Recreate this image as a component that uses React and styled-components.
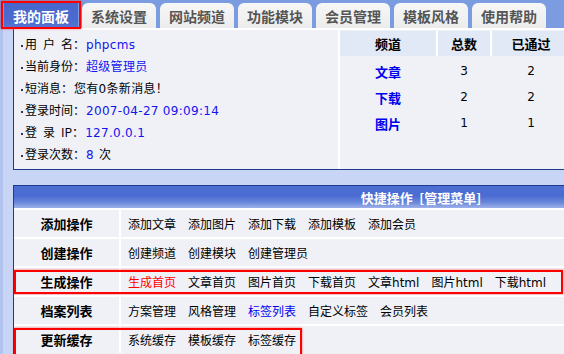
import React from 'react'
import styled, { createGlobalStyle } from 'styled-components'

const tabs = ['我的面板', '系统设置', '网站频道', '功能模块', '会员管理', '模板风格', '使用帮助']

const infoLines = [
  { label: '用\u2002户\u2002名：', parts: [{ text: 'phpcms', blue: true }] },
  { label: '当前身份：', parts: [{ text: '超级管理员', blue: true }] },
  { label: '短消息：', parts: [{ text: '您有0条新消息！' }] },
  { label: '登录时间：', parts: [{ text: '2007-04-27 09:09:14', blue: true }] },
  { label: '登\u2002录\u2002IP：', parts: [{ text: '127.0.0.1', blue: true }] },
  { label: '登录次数：', parts: [{ text: '8', blue: true }, { text: ' 次' }] },
]

const stats = [
  { name: '文章', total: 3, passed: 2 },
  { name: '下载', total: 2, passed: 2 },
  { name: '图片', total: 1, passed: 1 },
]

const quickRows = [
  { title: '添加操作', items: [{ text: '添加文章' }, { text: '添加图片' }, { text: '添加下载' }, { text: '添加模板' }, { text: '添加会员' }] },
  { title: '创建操作', items: [{ text: '创建频道' }, { text: '创建模块' }, { text: '创建管理员' }] },
  {
    title: '生成操作',
    mark: 549,
    items: [
      { text: '生成首页', tone: 'red' }, { text: '文章首页' }, { text: '图片首页' }, { text: '下载首页' },
      { text: '文章html' }, { text: '图片html' }, { text: '下载html' },
    ],
  },
  { title: '档案列表', items: [{ text: '方案管理' }, { text: '风格管理' }, { text: '标签列表', tone: 'blue' }, { text: '自定义标签' }, { text: '会员列表' }] },
  { title: '更新缓存', mark: 288, tall: true, items: [{ text: '系统缓存' }, { text: '模板缓存' }, { text: '标签缓存' }] },
]

const App = () => (
  <Root>
    <GlobalStyle />
    <TabBar>
      {tabs.map((t, i) => (
        <Tab key={t} $active={i === 0}>{t}</Tab>
      ))}
    </TabBar>
    <Body>
      <InfoPanel>
        <InfoList>
          {infoLines.map(({ label, parts }) => (
            <InfoLine key={label}>
              {label}
              {parts.map((p, i) => (
                <Value key={i} $blue={p.blue}>{p.text}</Value>
              ))}
            </InfoLine>
          ))}
        </InfoList>
        <StatBox>
          <StatHead>频道</StatHead>
          <StatHead $split>总数</StatHead>
          <StatHead $split>已通过</StatHead>
          {stats.map(({ name, total, passed }) => (
            <React.Fragment key={name}>
              <StatCell><StatLink>{name}</StatLink></StatCell>
              <StatCell $split>{total}</StatCell>
              <StatCell $split>{passed}</StatCell>
            </React.Fragment>
          ))}
        </StatBox>
      </InfoPanel>

      <QuickPanel>
        <QuickHeader>快捷操作{'\u2002'}[管理菜单]</QuickHeader>
        {quickRows.map(({ title, items, mark, tall }) => (
          <QuickRow key={title}>
            <RowTitle>{title}</RowTitle>
            <RowItems>
              {items.map(({ text, tone }) => (
                <Item key={text} $tone={tone}>{text}</Item>
              ))}
            </RowItems>
            {mark && <Mark $width={mark} $tall={tall} />}
          </QuickRow>
        ))}
      </QuickPanel>
    </Body>
  </Root>
)

export default App

/* STYLES */

const GlobalStyle = createGlobalStyle`
  body {
    margin: 0;
    background: #c9d5f5;
    font-family: "DejaVu Sans", "Noto Sans CJK SC", sans-serif;
    font-size: 12px;
    color: #000;
  }
`

const Root = styled.div`
  position: relative;
  width: 564px;
  height: 354px;
  overflow: hidden;
  background: #c9d5f5;
`

const TabBar = styled.div`
  display: flex;
  gap: 4px;
  height: 28px;
  padding: 3px 0 0 4px;
  box-sizing: border-box;
  background: #7c9ce2;
`

const Tab = styled.div`
  position: relative;
  flex: 0 0 74px;
  display: flex;
  align-items: center;
  justify-content: center;
  border-radius: ${p => (p.$active ? '0' : '6px 6px 0 0')};
  background: ${p => (p.$active ? 'linear-gradient(#4767cc, #4b6bd0 70%, #5575d6)' : 'linear-gradient(#f7f7f7, #ececec)')};
  color: ${p => (p.$active ? '#fff' : '#555')};
  font-family: "Noto Sans CJK SC", sans-serif;
  font-size: 14px;
  font-weight: bold;

  ${p => p.$active && `
    &::after {
      content: '';
      position: absolute;
      left: -3px;
      top: -2px;
      width: 80px;
      height: 28px;
      box-sizing: border-box;
      border: 2px solid #f00;
      box-shadow: 0 0 2px rgba(255, 0, 0, 0.6);
    }
  `}
`

const Body = styled.div`
  border-left: 3px solid #b2c3ef;
  padding-left: 10px;
`

const InfoPanel = styled.div`
  display: flex;
  width: 560px;
  height: 139px;
  background: #eff1f7;
  border-top: 2px solid #fff;
  border-left: 1px solid #1f3b8f;
  border-bottom: 1px solid #1f3b8f;
`

const InfoList = styled.div`
  width: 324px;
  padding: 3px 0 0 7px;
  box-sizing: border-box;
`

const InfoLine = styled.div`
  height: 22px;
  line-height: 22px;
  white-space: nowrap;
  font-family: "Noto Sans CJK SC", sans-serif;

  &::before {
    content: '';
    display: inline-block;
    width: 2px;
    height: 2px;
    margin-right: 2px;
    vertical-align: middle;
    background: #335;
  }
`

const Value = styled.span`
  margin-left: 1px;
  font-family: "DejaVu Sans", "Noto Sans CJK SC", sans-serif;
  letter-spacing: 0.3px;
  color: ${p => (p.$blue ? '#1414ee' : '#000')};
`

const StatBox = styled.div`
  display: grid;
  grid-template-columns: 96px 54px 80px;
  grid-auto-rows: 26px;
  align-content: start;
  border-left: 2px solid #fff;
  padding-top: 1px;
`

const StatHead = styled.div`
  height: 25px;
  display: flex;
  align-items: center;
  justify-content: center;
  background: #e1e8f6;
  border-left: ${p => (p.$split ? '2px solid #fff' : 'none')};
  font-family: "Noto Sans CJK SC", sans-serif;
  font-size: 13px;
  font-weight: bold;
`

const StatCell = styled.div`
  display: flex;
  align-items: center;
  justify-content: center;
  padding-left: ${p => (p.$split ? '2px' : '0')};
  transform: translateY(1px);
`

const StatLink = styled.span`
  color: #0000f0;
  font-family: "Noto Sans CJK SC", sans-serif;
  font-size: 13px;
  font-weight: bold;
`

const QuickPanel = styled.div`
  width: 814px;
  margin-top: 15px;
  padding-bottom: 2px;
  background: #eff1f7;
  border: 1px solid #1f3b8f;
`

const QuickHeader = styled.div`
  height: 22px;
  display: flex;
  align-items: center;
  justify-content: center;
  background: linear-gradient(#4d6ed2, #4a6bd2 45%, #6a88da 75%, #9db1ea);
  color: #fff;
  font-family: "Noto Sans CJK SC", sans-serif;
  font-size: 13px;
  font-weight: bold;
`

const QuickRow = styled.div`
  position: relative;
  display: flex;
  height: 27px;
  border-top: 2px solid #fff;
`

const RowTitle = styled.div`
  flex: 0 0 105px;
  display: flex;
  align-items: center;
  justify-content: center;
  border-right: 2px solid #fff;
  font-family: "Noto Sans CJK SC", sans-serif;
  font-size: 13px;
  font-weight: bold;
`

const RowItems = styled.div`
  display: flex;
  align-items: center;
  gap: 12px;
  padding-left: 7px;
`

const Item = styled.span`
  white-space: nowrap;
  color: ${p => (p.$tone === 'red' ? '#f00' : p.$tone === 'blue' ? '#0000f0' : '#000')};
`

const Mark = styled.div`
  position: absolute;
  left: 0;
  top: 2px;
  width: ${p => p.$width}px;
  height: ${p => (p.$tall ? '32px' : '24px')};
  box-sizing: border-box;
  border: 2px solid #f00;
  box-shadow: 0 0 2px rgba(255, 0, 0, 0.6);
  pointer-events: none;
`
